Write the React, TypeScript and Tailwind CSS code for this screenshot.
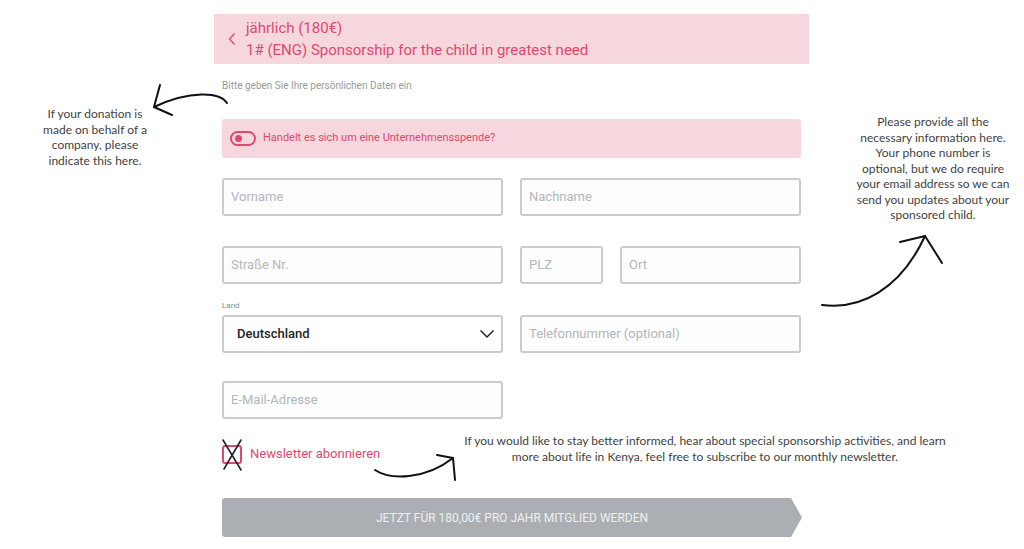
import React from 'react';

const formFont = { fontFamily: 'Roboto, "Noto Sans", sans-serif' };

const Field = ({ placeholder, className = '' }: { placeholder: string; className?: string }) => (
  <div
    className={`h-[38px] rounded-[3px] border-2 border-[#c9cbce] bg-[#fdfdfd] flex items-center px-[7px] text-[13px] text-[#b3b6ba] ${className}`}
  >
    {placeholder}
  </div>
);

const Note = ({ children, className }: { children: React.ReactNode; className: string }) => (
  <p
    className={`absolute text-center text-[12px] leading-[15.5px] text-[#3f3f3f] ${className}`}
    style={{ fontFamily: 'Lato, "Open Sans", sans-serif' }}
  >
    {children}
  </p>
);

export default function App() {
  return (
    <div className="relative w-[1024px] h-[549px] bg-white overflow-hidden" style={formFont}>
      <div className="pt-[14px] pl-[214px] flex flex-col">
        {/* selected plan */}
        <div className="w-[595px] h-[50px] bg-[#f7d7de] flex items-center text-[#e0486e]">
          <svg className="ml-[13px] w-[10px] h-[14px]" viewBox="0 0 10 14" fill="none">
            <path d="M7.5 1.5 L2.5 7 L7.5 12.5" stroke="#e0486e" strokeWidth="1.3" />
          </svg>
          <div className="ml-[9px] text-[15px] leading-[22px] -mt-[1px]">
            <div>jährlich (180€)</div>
            <div>1# (ENG) Sponsorship for the child in greatest need</div>
          </div>
        </div>

        <div className="pl-[8px] w-[595px]">
          <p className="mt-[15px] text-[10px] text-[#9a9a9a] leading-[14px]">
            Bitte geben Sie Ihre persönlichen Daten ein
          </p>

          {/* company toggle */}
          <div className="mt-[26px] w-[579px] h-[39px] bg-[#f7d7de] rounded-[3px] flex items-center pl-[8px]">
            <div className="w-[26px] h-[15px] rounded-full border-2 border-[#e0486e] flex items-center pl-[3px]">
              <div className="w-[7px] h-[7px] rounded-full bg-[#e0486e]" />
            </div>
            <span className="ml-[7px] text-[11px] text-[#e0486e]">Handelt es sich um eine Unternehmensspende?</span>
          </div>

          <div className="mt-[20px] w-[579px] flex gap-[17px]">
            <Field placeholder="Vorname" className="w-[281px]" />
            <Field placeholder="Nachname" className="w-[281px]" />
          </div>

          <div className="mt-[30px] w-[579px] flex gap-[17px]">
            <Field placeholder="Straße Nr." className="w-[281px]" />
            <Field placeholder="PLZ" className="w-[83px]" />
            <Field placeholder="Ort" className="w-[181px]" />
          </div>

          <p className="mt-[17px] text-[8px] leading-[10px] text-[#8a8a8a]">Land</p>
          <div className="mt-[4px] w-[579px] flex gap-[17px]">
            <div className="w-[281px] h-[38px] rounded-[3px] border-2 border-[#c9cbce] bg-white flex items-center justify-between pl-[13px] pr-[6px]">
              <span className="text-[13px] font-medium text-[#222]">Deutschland</span>
              <svg className="w-[16px] h-[10px]" viewBox="0 0 16 10" fill="none">
                <path d="M1.5 1.5 L8 8 L14.5 1.5" stroke="#222" strokeWidth="1.5" />
              </svg>
            </div>
            <Field placeholder="Telefonnummer (optional)" className="w-[281px]" />
          </div>

          <div className="mt-[28px]">
            <Field placeholder="E-Mail-Adresse" className="w-[281px]" />
          </div>

          {/* newsletter */}
          <div className="mt-[25px] flex items-center h-[20px]">
            <div className="relative w-[20px] h-[19px] rounded-[3px] border-2 border-[#e0486e]">
              <svg className="absolute -left-[3px] -top-[8px] w-[22px] h-[32px]" viewBox="0 0 22 32" fill="none">
                <path d="M2 1 L20 31" stroke="#222" strokeWidth="1.6" strokeLinecap="round" />
                <path d="M20 1 L3 30" stroke="#222" strokeWidth="1.6" strokeLinecap="round" />
              </svg>
            </div>
            <span className="ml-[8px] text-[13px] text-[#e0486e]">Newsletter abonnieren</span>
          </div>

          {/* submit */}
          <button className="mt-[34px] w-[580px] h-[39px] bg-[#abafb4] rounded-l-[3px] text-[12px] text-[#eef0f2] uppercase [clip-path:polygon(0_0,calc(100%-11px)_0,100%_50%,calc(100%-11px)_100%,0_100%)]">
            Jetzt für 180,00€ pro Jahr Mitglied werden
          </button>
        </div>
      </div>

      {/* annotations */}
      <Note className="left-[25px] top-[106px] w-[140px]">
        If your donation is<br />made on behalf of a<br />company, please<br />indicate this here.
      </Note>
      <Note className="left-[833px] top-[114px] w-[200px]">
        Please provide all the<br />necessary information here.<br />Your phone number is<br />optional, but we do require<br />your email address so we can<br />send you updates about your<br />sponsored child.
      </Note>
      <Note className="left-[420px] top-[433px] w-[570px]">
        If you would like to stay better informed, hear about special sponsorship activities, and learn
        <br />more about life in Kenya, feel free to subscribe to our monthly newsletter.
      </Note>

      <svg className="absolute left-0 top-0 w-[1024px] h-[549px] pointer-events-none" viewBox="0 0 1024 549" fill="none">
        <g stroke="#111" strokeWidth="2" strokeLinecap="round" fill="none">
          <path d="M227 103 C 220 92, 190 90, 154 107" />
          <path d="M154 107 L 160 85" />
          <path d="M154 107 L 172 115" />

          <path d="M822 305 C 860 310, 900 290, 925 236" />
          <path d="M925 236 L 900 242" />
          <path d="M925 236 L 942 263" />

          <path d="M375 470 C 390 480, 425 480, 453 458" />
          <path d="M453 458 L 437 455" />
          <path d="M453 458 L 455 480" />
        </g>
      </svg>
    </div>
  );
}
